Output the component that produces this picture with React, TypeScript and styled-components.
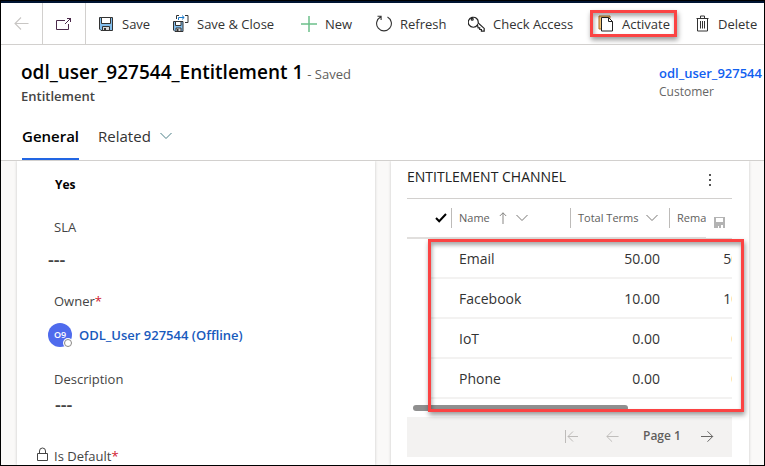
import React from "react";
import styled, { createGlobalStyle, css } from "styled-components";

const GlobalStyle = createGlobalStyle`
  *, *::before, *::after { box-sizing: border-box; }
  body {
    margin: 0;
    overflow: hidden;
    font-family: "Open Sans", "Noto Sans", sans-serif;
    font-size: 13px;
    line-height: 20px;
    color: #333;
    background: #fff;
  }
  button { font: inherit; color: inherit; background: none; border: 0; padding: 0; cursor: pointer; }
  h1, h2, p { margin: 0; }
  a { text-decoration: none; }
  svg { display: block; flex: none; }
`;

const Frame = styled.div`
  display: flex;
  flex-direction: column;
  height: 100vh;
  border: 1px solid #000;
  overflow: hidden;
`;

const NavStrip = styled.div`
  flex: none;
  height: 2px;
  background: #001433;
`;

const CommandBar = styled.div`
  display: flex;
  flex: none;
  height: 42px;
  border-bottom: 1px solid #d2d0ce;
  overflow: hidden;
`;

const NavButton = styled.button<{ $width: number }>`
  display: flex;
  flex: none;
  align-items: center;
  justify-content: center;
  width: ${(p) => p.$width}px;
  border-right: 1px solid #d2d0ce;
`;

const Command = styled.button<{ $width: number }>`
  position: relative;
  display: flex;
  flex: none;
  align-items: center;
  gap: 8px;
  width: ${(p) => p.$width}px;
  padding-left: 12px;
  white-space: nowrap;
`;

const calloutStyle = css`
  position: absolute;
  border: 3px solid #fb4343;
  box-shadow: 1px 3px 5px rgba(0, 0, 0, 0.4), inset 1px 3px 4px rgba(0, 0, 0, 0.35);
  pointer-events: none;
`;

const CommandCallout = styled.span`
  ${calloutStyle}
  inset: 7px 7px 7px 4px;
`;

const GridCallout = styled.div`
  ${calloutStyle}
  inset: 40px -12px -1px 21px;
`;

const Header = styled.header`
  display: flex;
  flex: none;
  justify-content: space-between;
  height: 80px;
  padding: 14px 0 0 20px;
`;

const Heading = styled.div`
  white-space: nowrap;
`;

const TitleLine = styled.div`
  display: flex;
  align-items: baseline;
  gap: 4px;
  height: 27px;
`;

const Title = styled.h1`
  font-size: 19px;
  line-height: 26px;
  font-weight: 600;
  color: #000;
`;

const Saved = styled.span`
  color: #605e5c;
`;

const Entity = styled.p`
  font-weight: 600;
  line-height: 20px;
  color: #444;
`;

const Customer = styled.div`
  flex: none;
  width: 105px;
  overflow: hidden;
  white-space: nowrap;
  padding-top: 5px;
`;

const CustomerLink = styled.a`
  display: block;
  font-weight: 600;
  line-height: 19px;
  color: #1160f0;
`;

const CustomerLabel = styled.p`
  font-size: 12px;
  line-height: 18px;
  color: #666;
`;

const Tabs = styled.div`
  display: flex;
  flex: none;
  gap: 19px;
  height: 36px;
  padding-left: 21px;
  border-bottom: 1px solid #d2d0ce;
`;

const Tab = styled.button<{ $active?: boolean }>`
  display: flex;
  align-items: center;
  gap: 9px;
  height: 35px;
  padding-bottom: 11px;
  font-size: 15px;
  font-weight: ${(p) => (p.$active ? 600 : 400)};
  color: ${(p) => (p.$active ? "#000" : "#333")};
  border-bottom: 2px solid ${(p) => (p.$active ? "#2266e3" : "transparent")};
`;

const Body = styled.main`
  display: grid;
  grid-template-columns: 1fr 1fr;
  gap: 16px;
  flex: 1;
  min-height: 0;
  padding: 0 15px 0 16px;
  background: #faf9f8;
  overflow: hidden;
`;

const Card = styled.section`
  min-width: 0;
  background: #fff;
  box-shadow: 0 0 3px rgba(0, 0, 0, 0.2);
  overflow: hidden;
`;

const FormCard = styled(Card)`
  padding: 14px 16px 0 20px;
`;

const Field = styled.div<{ $after: number }>`
  padding-left: 11px;
  margin-bottom: ${(p) => p.$after}px;
`;

const FieldLabel = styled.div<{ $gap?: number }>`
  position: relative;
  margin: 0 0 ${(p) => p.$gap ?? 0}px 6px;
  color: #444;
`;

const FieldValue = styled.div<{ $inset?: boolean }>`
  display: flex;
  align-items: center;
  gap: 7px;
  min-height: 20px;
  padding-left: ${(p) => (p.$inset ? 7 : 0)}px;
  font-weight: 600;
  color: #444;
`;

const Answer = styled.span`
  font-size: 12px;
  font-weight: 700;
  color: #000;
`;

const EmptyValue = styled.span`
  font-size: 18px;
`;

const Required = styled.span`
  color: #d1202f;
`;

const LockSlot = styled.span`
  position: absolute;
  left: -17px;
  top: 1px;
`;

const Avatar = styled.span`
  position: relative;
  display: flex;
  align-items: center;
  justify-content: center;
  width: 24px;
  height: 24px;
  border-radius: 50%;
  background: #4f6bed;
  color: #fff;
  font-size: 9px;
`;

const Presence = styled.span`
  position: absolute;
  right: 0;
  bottom: 0;
  width: 8px;
  height: 8px;
  border: 1px solid #8a8886;
  border-radius: 50%;
  background: #fff;
  box-shadow: 0 0 0 1px #fff;
`;

const OwnerLink = styled.a`
  color: #185abd;
`;

const GridCard = styled(Card)`
  padding: 0 17px 0 16px;
`;

const GridTitleBar = styled.div`
  display: flex;
  align-items: center;
  justify-content: space-between;
  height: 38px;
  padding-right: 20px;
  border-bottom: 1px solid #d2d0ce;
`;

const GridTitle = styled.h2`
  padding-bottom: 5px;
  font-size: 14px;
  font-weight: 400;
  color: #222;
  white-space: nowrap;
`;

const GridArea = styled.div`
  position: relative;
  margin-bottom: 6px;
`;

const Scroller = styled.div`
  overflow: hidden;
`;

const Table = styled.table`
  table-layout: fixed;
  width: 361px;
  border-collapse: separate;
  border-spacing: 0;
`;

const Col = styled.col<{ $width: number }>`
  width: ${(p) => p.$width}px;
`;

const Th = styled.th`
  height: 40px;
  padding: 0;
  font-size: 11px;
  font-weight: 400;
  text-align: left;
  color: #605e5c;
  border-bottom: 2px solid #e1dfdd;
`;

const HeadCell = styled.div<{ $check?: boolean }>`
  display: flex;
  align-items: center;
  justify-content: ${(p) => (p.$check ? "flex-end" : "flex-start")};
  gap: 7px;
  height: 20px;
  padding: 0 ${(p) => (p.$check ? 4 : 0)}px 0 ${(p) => (p.$check ? 0 : 7)}px;
  border-left: 1px solid ${(p) => (p.$check ? "transparent" : "#bdbbb9")};
  white-space: nowrap;
`;

const Td = styled.td<{ $numeric?: boolean; $blank?: boolean }>`
  height: 40px;
  padding: 2px ${(p) => (p.$numeric ? 9 : 0)}px 0 ${(p) => (p.$numeric ? 0 : 8)}px;
  font-size: 14px;
  text-align: ${(p) => (p.$numeric ? "right" : "left")};
  border-bottom: 2px solid ${(p) => (p.$blank ? "transparent" : "#f3f2f1")};
`;

const SaveGrid = styled.button`
  position: absolute;
  top: 1px;
  right: 0;
  display: flex;
  align-items: center;
  justify-content: center;
  width: 26px;
  height: 39px;
  padding-top: 6px;
  background: #fff;
  border-bottom: 1px solid #e1dfdd;
`;

const ScrollThumb = styled.div`
  width: 66%;
  height: 6px;
  margin: 6px 0 0 6px;
  border-radius: 3px;
  background: #8f8f8f;
`;

const Pager = styled.nav`
  display: flex;
  align-items: center;
  justify-content: flex-end;
  height: 40px;
  padding: 0 18px 2px 0;
  background: #f3f2f1;
  font-size: 12px;
  font-weight: 600;
  color: #605e5c;
`;

const PageLabel = styled.span`
  width: 82px;
  padding-left: 24px;
  white-space: nowrap;
`;

const PageButton = styled.button<{ $gap?: number }>`
  margin-right: ${(p) => p.$gap ?? 0}px;
`;

type Point = "left" | "right" | "up";

const arrowPaths: Record<Point, string> = {
  left: "M14.500 7.500H1M7 1.500l-6 6 6 6",
  right: "M0 7.500h13.500M7.500 1.500l6 6-6 6",
  up: "M7.500 15V1M3.500 5l4-4 4 4",
};

const Arrow = ({ point, color, size = 15 }: { point: Point; color: string; size?: number }) => (
  <svg width={size} height={size} viewBox="0 0 15 15" fill="none" stroke={color} strokeWidth="1.100">
    <path d={arrowPaths[point]} />
  </svg>
);

const Chevron = ({ color = "#797775" }: { color?: string }) => (
  <svg width="12" height="8" viewBox="0 0 12 8" fill="none" stroke={color}>
    <path d="M.5 1 6 6.500 11.500 1" />
  </svg>
);

const PopOutIcon = () => (
  <svg width="16" height="14" viewBox="0 0 16 14" fill="none" stroke="#4b2a4b">
    <path d="M9 3.500H.5v9h12V7M9 7l6-6M11 1.500h3.500V5" />
  </svg>
);

const SaveIcon = () => (
  <svg width="16" height="16" viewBox="0 0 16 16">
    <path d="M1.500 1.500h13v13H3l-1.500-1.500z" fill="#83beec" stroke="#333" />
    <path d="M3.500 1.500h9v6h-9z" fill="#fff" stroke="#333" />
    <path d="M4.500 10.500h7v4h-7z" fill="#d8d8d8" stroke="#333" />
    <path d="M6 12h2v2.500H6z" fill="#333" />
  </svg>
);

const SaveCloseIcon = () => (
  <svg width="16" height="17" viewBox="0 0 16 17" fill="none">
    <path d="M.5 6.500h9.500v10H2L.5 15z" fill="#83beec" stroke="#333" />
    <path d="M2.500 6.500h5.500v4H2.500z" fill="#fff" stroke="#333" />
    <path d="M3 13h5v3.500H3z" fill="#d8d8d8" stroke="#333" />
    <path d="M4 14h1.500v2.500H4z" fill="#333" />
    <path d="M3.500 4V.5H6M12 .5h3v7h-3" stroke="#333" />
    <path d="M5.500 5V2.500H11M9 .5l2.200 2L9 4.500" stroke="#1979ca" />
  </svg>
);

const PlusIcon = () => (
  <svg width="16" height="16" viewBox="0 0 16 16" stroke="#6cc08b" strokeWidth="1.500">
    <path d="M8 0v16M0 8h16" />
  </svg>
);

const RefreshIcon = () => (
  <svg width="16" height="17" viewBox="0 0 16 17" fill="none" stroke="#333" strokeWidth="1.100">
    <path d="M11.500 2A7.400 7.400 0 1 1 4.500 2M1.500 1.200h3.600V5" />
  </svg>
);

const KeyIcon = () => (
  <svg width="17" height="17" viewBox="0 0 17 17" fill="none" stroke="#222" strokeWidth="1.200">
    <path d="M9.500 9.900A5 5 0 1 1 10.200 8l6 5.400v2.800h-2.800v-1.700h-1.700v-1.700h-1.600z" />
    <circle cx="4.200" cy="4.200" r="1" />
  </svg>
);

const ActivateIcon = () => (
  <svg width="16" height="17" viewBox="0 0 16 17">
    <path d="M1 1h11v2.500H4v10.500H1z" fill="#f3c677" stroke="#a8681c" />
    <path d="M3.500 2.500h7l4 4v9.500h-11z" fill="#fff" stroke="#222" />
    <path d="M10.500 2.500v4h4" fill="none" stroke="#222" />
  </svg>
);

const TrashIcon = () => (
  <svg width="14" height="17" viewBox="0 0 14 17" fill="none" stroke="#333">
    <path d="M.5 3.500h12M4.500 3V1h4v2M1.500 3.500v12.500h10V3.500M4.500 6v7.500M6.500 6v7.500M8.500 6v7.500" />
  </svg>
);

const CheckIcon = () => (
  <svg width="12" height="10" viewBox="0 0 12 10" fill="none" stroke="#000" strokeWidth="2">
    <path d="m1 5 3.200 3.300L11 1" />
  </svg>
);

const LockIcon = () => (
  <svg width="12" height="15" viewBox="0 0 12 15" fill="none" stroke="#444">
    <path d="M.5 6.500h10v7H.5zM2.500 6.500V4a3 3 0 0 1 6 0v2.500" />
  </svg>
);

const MoreIcon = () => (
  <svg width="4" height="14" viewBox="0 0 4 14" fill="#555">
    <path d="M1 1h2v2H1zM1 6h2v2H1zM1 11h2v2H1z" />
  </svg>
);

const GrayDiskIcon = () => (
  <svg width="11" height="11" viewBox="0 0 11 11" fill="#b3b3b3">
    <path d="M0 0h11v11H9V8H7v3H5V9H4v2H2V8v3H0zM2 1v4h7V1z" fillRule="evenodd" />
  </svg>
);

const FirstPageIcon = () => (
  <svg width="13" height="13" viewBox="0 0 13 13" fill="none" stroke="#bdbbb9">
    <path d="M.5 0v13M13 6.500H3M8 1.500l-5 5 5 5" />
  </svg>
);

const commands = [
  { label: "Save", width: 75, icon: <SaveIcon /> },
  { label: "Save & Close", width: 128, icon: <SaveCloseIcon /> },
  { label: "New", width: 75, icon: <PlusIcon /> },
  { label: "Refresh", width: 92, icon: <RefreshIcon /> },
  { label: "Check Access", width: 130, icon: <KeyIcon /> },
  { label: "Activate", width: 98, icon: <ActivateIcon />, marked: true },
  { label: "Delete", width: 80, icon: <TrashIcon /> },
];

const channels = [
  { name: "Email", total: "50.00", remaining: "50.00" },
  { name: "Facebook", total: "10.00", remaining: "10.00" },
  { name: "IoT", total: "0.00", remaining: "0.00" },
  { name: "Phone", total: "0.00", remaining: "0.00" },
];

const Columns = () => (
  <colgroup>
    <Col $width={21} />
    <Col $width={23} />
    <Col $width={119} />
    <Col $width={99} />
    <Col $width={99} />
  </colgroup>
);

export default function App() {
  return (
    <>
      <GlobalStyle />
      <Frame>
        <NavStrip />
        <CommandBar role="toolbar" aria-label="Commands">
          <NavButton $width={42} aria-label="Back">
            <Arrow point="left" color="#c8c6c4" />
          </NavButton>
          <NavButton $width={43} aria-label="Open in new window">
            <PopOutIcon />
          </NavButton>
          {commands.map((c) => (
            <Command key={c.label} $width={c.width}>
              {c.icon}
              {c.label}
              {c.marked && <CommandCallout />}
            </Command>
          ))}
        </CommandBar>

        <Header>
          <Heading>
            <TitleLine>
              <Title>odl_user_927544_Entitlement 1</Title>
              <Saved>- Saved</Saved>
            </TitleLine>
            <Entity>Entitlement</Entity>
          </Heading>
          <Customer>
            <CustomerLink href="#customer">odl_user_927544</CustomerLink>
            <CustomerLabel>Customer</CustomerLabel>
          </Customer>
        </Header>

        <Tabs role="tablist">
          <Tab role="tab" aria-selected="true" $active>
            General
          </Tab>
          <Tab role="tab" aria-selected="false">
            Related
            <Chevron color="#4a7f86" />
          </Tab>
        </Tabs>

        <Body>
          <FormCard>
            <Field $after={22}>
              <FieldValue $inset>
                <Answer>Yes</Answer>
              </FieldValue>
            </Field>
            <Field $after={22}>
              <FieldLabel $gap={12}>SLA</FieldLabel>
              <FieldValue>
                <EmptyValue>---</EmptyValue>
              </FieldValue>
            </Field>
            <Field $after={22}>
              <FieldLabel $gap={12}>
                Owner<Required>*</Required>
              </FieldLabel>
              <FieldValue>
                <Avatar>
                  O9
                  <Presence />
                </Avatar>
                <OwnerLink href="#owner">ODL_User 927544 (Offline)</OwnerLink>
              </FieldValue>
            </Field>
            <Field $after={32}>
              <FieldLabel $gap={5}>Description</FieldLabel>
              <FieldValue $inset>
                <EmptyValue>---</EmptyValue>
              </FieldValue>
            </Field>
            <Field $after={0}>
              <FieldLabel>
                <LockSlot>
                  <LockIcon />
                </LockSlot>
                Is Default<Required>*</Required>
              </FieldLabel>
            </Field>
          </FormCard>

          <GridCard>
            <GridTitleBar>
              <GridTitle>ENTITLEMENT CHANNEL</GridTitle>
              <button aria-label="More commands">
                <MoreIcon />
              </button>
            </GridTitleBar>
            <GridArea>
              <Scroller>
                <Table>
                  <Columns />
                  <thead>
                    <tr>
                      <Th colSpan={2} aria-label="Selected">
                        <HeadCell $check>
                          <CheckIcon />
                        </HeadCell>
                      </Th>
                      <Th>
                        <HeadCell>
                          Name
                          <Arrow point="up" color="#797775" size={12} />
                          <Chevron />
                        </HeadCell>
                      </Th>
                      <Th>
                        <HeadCell>
                          Total Terms
                          <Chevron />
                        </HeadCell>
                      </Th>
                      <Th>
                        <HeadCell>Remaining Terms</HeadCell>
                      </Th>
                    </tr>
                  </thead>
                  <tbody>
                    {channels.map((row) => (
                      <tr key={row.name}>
                        <Td $blank />
                        <Td />
                        <Td>{row.name}</Td>
                        <Td $numeric>{row.total}</Td>
                        <Td $numeric>{row.remaining}</Td>
                      </tr>
                    ))}
                  </tbody>
                </Table>
                <ScrollThumb />
              </Scroller>
              <SaveGrid aria-label="Save grid">
                <GrayDiskIcon />
              </SaveGrid>
              <GridCallout />
            </GridArea>
            <Pager aria-label="Pages">
              <PageButton $gap={28} aria-label="First page" disabled>
                <FirstPageIcon />
              </PageButton>
              <PageButton aria-label="Previous page" disabled>
                <Arrow point="left" color="#bdbbb9" size={13} />
              </PageButton>
              <PageLabel>Page 1</PageLabel>
              <PageButton aria-label="Next page">
                <Arrow point="right" color="#605e5c" size={13} />
              </PageButton>
            </Pager>
          </GridCard>
        </Body>
      </Frame>
    </>
  );
}
